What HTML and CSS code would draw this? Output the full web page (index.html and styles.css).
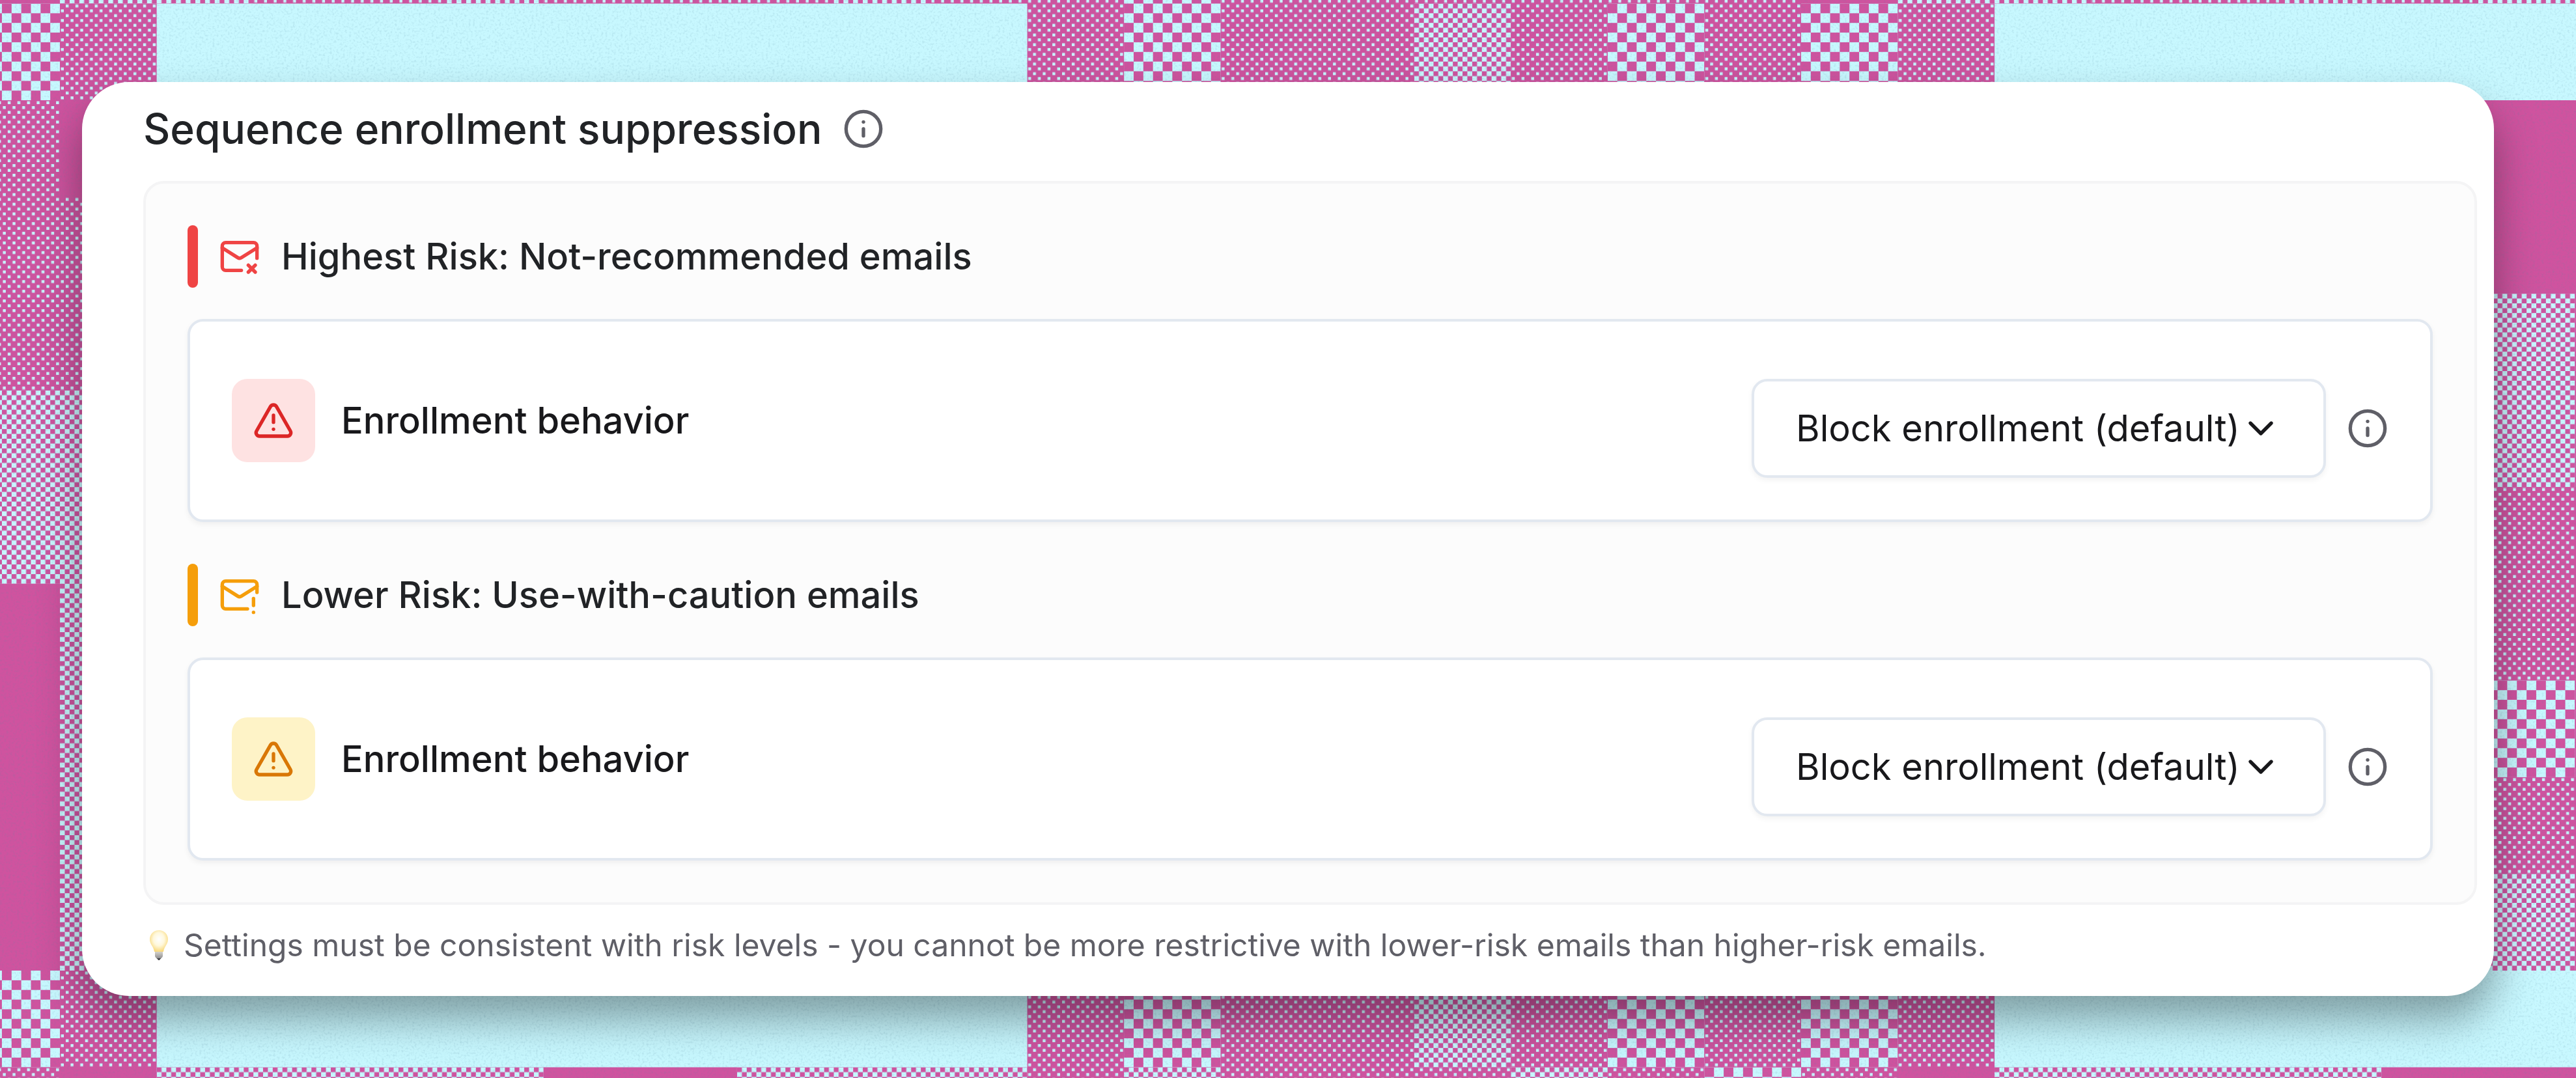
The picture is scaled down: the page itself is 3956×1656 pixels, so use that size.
FILE: index.html
```html
<!DOCTYPE html>
<html lang="en">
<head>
    <meta charset="UTF-8">
    <meta name="viewport" content="width=device-width, initial-scale=1.0">
    <title>Sequence enrollment suppression</title>
    <link rel="stylesheet" href="styles.css">
</head>
<body>
    <!-- Woven backdrop: every module is 20 units square -->
    <svg class="backdrop" viewBox="0 0 3956 1656" preserveAspectRatio="xMidYMid slice" aria-hidden="true">
        <defs>
            <pattern id="coarse" width="4" height="4" patternUnits="userSpaceOnUse">
                <path class="thread" d="M2 0h2v2h-2zM0 2h2v2h-2z"/>
            </pattern>
            <pattern id="fine" width="2" height="2" patternUnits="userSpaceOnUse">
                <path class="thread" d="M1 0h1v1h-1zM0 1h1v1h-1z"/>
            </pattern>
            <pattern id="dots" width="2" height="2" patternUnits="userSpaceOnUse">
                <path class="thread" d="M1.2 .2h.6v.6h-.6zM.2 1.2h.6v.6h-.6z"/>
            </pattern>
            <filter id="grain" x="0" y="0" width="100%" height="100%">
                <feTurbulence type="fractalNoise" baseFrequency="0.3" numOctaves="2" seed="4"/>
                <feColorMatrix values="0 0 0 0 0.1  0 0 0 0 0.25  0 0 0 0 0.35  0 0 0 1.4 -0.66"/>
            </filter>
        </defs>
        <rect class="cloth" width="3956" height="1656"/>
        <g transform="translate(-56.5 5.5) scale(7.4275)">
            <!-- plain areas -->
            <path class="thread" d="M40 0h180v20h-180zM420 0h140v20h-140zM40 200h180v20h-180zM420 200h140v20h-140z"/>
            <!-- coarse checks -->
            <path fill="url(#coarse)" d="M0 0h20v20h-20zM240 -20h20v40h-20zM340 0h20v20h-20zM380 0h20v20h-20zM0 200h20v20h-20zM240 200h20v20h-20zM340 200h20v20h-20zM380 200h20v20h-20zM360 220h20v20h-20zM520 140h20v20h-20z"/>
            <!-- fine checks -->
            <path fill="url(#fine)" d="M300 0h20v20h-20zM300 200h20v20h-20zM0 80h40v40h-40zM20 120h20v80h-20zM520 60h20v40h-20zM520 180h20v20h-20zM20 -20h40v20h-40zM100 -20h20v20h-20zM180 -20h20v20h-20zM400 -20h40v20h-40zM480 -20h20v20h-20zM520 -20h40v20h-40zM40 220h80v20h-80zM160 220h60v20h-60zM240 220h20v20h-20zM320 220h20v20h-20zM420 220h80v20h-80z"/>
            <!-- dots -->
            <path fill="url(#dots)" d="M20 0h20v20h-20zM220 0h20v20h-20zM260 0h40v20h-40zM320 0h20v20h-20zM360 0h20v20h-20zM400 0h20v20h-20zM0 20h20v20h-20zM0 40h40v40h-40zM520 100h20v40h-20zM520 160h20v20h-20zM20 200h20v20h-20zM220 200h20v20h-20zM260 200h40v20h-40zM320 200h20v20h-20zM360 200h20v20h-20zM400 200h20v20h-20zM60 -20h40v20h-40zM120 -20h60v20h-60zM200 -20h40v20h-40zM260 -20h120v20h-120zM440 -20h40v20h-40zM500 -20h20v20h-20zM0 220h20v20h-20zM220 220h20v20h-20zM260 220h60v20h-60zM340 220h20v20h-20zM380 220h20v20h-20z"/>
        </g>
        <rect width="3956" height="1656" filter="url(#grain)" opacity="0.3"/>
    </svg>

    <main class="card">
        <div class="card-header">
            <h1>Sequence enrollment suppression</h1>
            <button type="button" class="info-button" aria-label="About sequence enrollment suppression">
                <svg class="icon" viewBox="0 0 24 24"><circle cx="12" cy="12" r="10"/><path d="M12 16v-4"/><path d="M12 8h.01"/></svg>
            </button>
        </div>

        <div class="panel">
            <section class="risk-section risk-high">
                <div class="risk-header">
                    <span class="risk-bar"></span>
                    <svg class="icon risk-icon" viewBox="0 0 24 24"><path d="M22 13V6a2 2 0 0 0-2-2H4a2 2 0 0 0-2 2v12c0 1.1.9 2 2 2h9"/><path d="m22 7-8.97 5.7a1.94 1.94 0 0 1-2.06 0L2 7"/><path d="m17 17 4 4"/><path d="m21 17-4 4"/></svg>
                    <h2>Highest Risk: Not-recommended emails</h2>
                </div>
                <div class="setting">
                    <span class="setting-icon">
                        <svg class="icon" viewBox="0 0 24 24"><path d="m21.73 18-8-14a2 2 0 0 0-3.48 0l-8 14A2 2 0 0 0 4 21h16a2 2 0 0 0 1.73-3"/><path d="M12 9v4"/><path d="M12 17h.01"/></svg>
                    </span>
                    <label for="high-risk-behavior">Enrollment behavior</label>
                    <div class="setting-controls">
                        <div class="select-wrap">
                            <select id="high-risk-behavior">
                                <option>Block enrollment (default)</option>
                            </select>
                            <svg class="icon chevron" viewBox="0 0 24 24"><path d="m6 9 6 6 6-6"/></svg>
                        </div>
                        <button type="button" class="info-button" aria-label="About highest risk behavior">
                            <svg class="icon" viewBox="0 0 24 24"><circle cx="12" cy="12" r="10"/><path d="M12 16v-4"/><path d="M12 8h.01"/></svg>
                        </button>
                    </div>
                </div>
            </section>

            <section class="risk-section risk-low">
                <div class="risk-header">
                    <span class="risk-bar"></span>
                    <svg class="icon risk-icon" viewBox="0 0 24 24"><path d="M22 10.5V6a2 2 0 0 0-2-2H4a2 2 0 0 0-2 2v12c0 1.1.9 2 2 2h12.5"/><path d="m22 7-8.97 5.7a1.94 1.94 0 0 1-2.06 0L2 7"/><path d="M20 14v4"/><path d="M20 22v.01"/></svg>
                    <h2>Lower Risk: Use-with-caution emails</h2>
                </div>
                <div class="setting">
                    <span class="setting-icon">
                        <svg class="icon" viewBox="0 0 24 24"><path d="m21.73 18-8-14a2 2 0 0 0-3.48 0l-8 14A2 2 0 0 0 4 21h16a2 2 0 0 0 1.73-3"/><path d="M12 9v4"/><path d="M12 17h.01"/></svg>
                    </span>
                    <label for="low-risk-behavior">Enrollment behavior</label>
                    <div class="setting-controls">
                        <div class="select-wrap">
                            <select id="low-risk-behavior">
                                <option>Block enrollment (default)</option>
                            </select>
                            <svg class="icon chevron" viewBox="0 0 24 24"><path d="m6 9 6 6 6-6"/></svg>
                        </div>
                        <button type="button" class="info-button" aria-label="About lower risk behavior">
                            <svg class="icon" viewBox="0 0 24 24"><circle cx="12" cy="12" r="10"/><path d="M12 16v-4"/><path d="M12 8h.01"/></svg>
                        </button>
                    </div>
                </div>
            </section>
        </div>

        <p class="hint">
            <svg class="bulb" viewBox="0 0 48 48" aria-hidden="true">
                <defs>
                    <radialGradient id="glow" cx="0.5" cy="0.42" r="0.6">
                        <stop offset="0" stop-color="#ffffff"/>
                        <stop offset="0.5" stop-color="#fff8dc"/>
                        <stop offset="1" stop-color="#f8d673"/>
                    </radialGradient>
                    <linearGradient id="cap" x1="0" y1="0" x2="0" y2="1">
                        <stop offset="0" stop-color="#d6d3cc"/>
                        <stop offset="1" stop-color="#8a8a8c"/>
                    </linearGradient>
                </defs>
                <path d="M24 1c8 0 14 6 14 14 0 8-6 11-7 19H17c-1-8-7-11-7-19C10 7 16 1 24 1z" fill="url(#glow)"/>
                <path d="M18 34h12v6c0 3-2 3-3 5h-6c-1-2-3-2-3-5z" fill="url(#cap)"/>
                <path d="M21 44h6l-2 3h-2z" fill="#4a4a4d"/>
            </svg>
            <span>Settings must be consistent with risk levels - you cannot be more restrictive with lower-risk emails than higher-risk emails.</span>
        </p>
    </main>
</body>
</html>
```

FILE: styles.css
```css
:root {
    --pink: #cf539f;
    --cyan: #c8f8ff;
    --border: #e2e8f0;
    --panel-border: #f4f4f5;
    --panel-bg: #fcfcfc;
    --text-primary: #18181b;
    --text-heading: #212326;
    --text-secondary: #5f5f67;
}

* {
    margin: 0;
    padding: 0;
    box-sizing: border-box;
}

body {
    font-family: Inter, 'Liberation Sans', sans-serif;
    background: var(--pink);
    color: var(--text-primary);
    min-height: 100vh;
    padding: 126px;
}

.backdrop {
    position: fixed;
    top: 0;
    left: 0;
    width: 100%;
    height: 100%;
    z-index: -1;
}

.cloth {
    fill: var(--pink);
}

.thread {
    fill: var(--cyan);
}

.card {
    background: #ffffff;
    border-radius: 72px;
    padding: 24px 26px 48px 94px;
    box-shadow: 0 36px 64px rgba(0, 0, 0, 0.36);
}

.icon {
    display: block;
    flex-shrink: 0;
    width: 64px;
    height: 64px;
    fill: none;
    stroke: currentColor;
    stroke-width: 2;
    stroke-linecap: round;
    stroke-linejoin: round;
}

h1,
h2,
label {
    font-size: 56px;
    font-weight: 500;
    line-height: 80px;
}

.card-header {
    display: flex;
    align-items: center;
    gap: 32px;
    margin-bottom: 32px;
}

h1 {
    font-size: 64px;
    line-height: 96px;
    color: var(--text-heading);
}

h2 {
    color: var(--text-heading);
}

.info-button {
    background: none;
    border: none;
    color: var(--text-secondary);
    cursor: pointer;
}

.panel {
    display: flex;
    flex-direction: column;
    gap: 64px;
    padding: 64px;
    background: var(--panel-bg);
    border: 4px solid var(--panel-border);
    border-radius: 32px;
}

.risk-section {
    display: flex;
    flex-direction: column;
    gap: 48px;
}

.risk-high {
    --accent: #ef4444;
    --accent-dark: #dc2626;
    --accent-bg: #fee2e2;
}

.risk-low {
    --accent: #f59e0b;
    --accent-dark: #d97706;
    --accent-bg: #fef3c7;
}

.risk-header {
    display: flex;
    align-items: center;
    gap: 32px;
}

.risk-bar {
    width: 16px;
    height: 96px;
    border-radius: 8px;
    background: var(--accent);
}

.risk-icon {
    color: var(--accent);
}

.setting {
    display: flex;
    align-items: center;
    gap: 40px;
    padding: 64px;
    background: #ffffff;
    border: 4px solid var(--border);
    border-radius: 24px;
    box-shadow: 0 4px 8px rgba(0, 0, 0, 0.05);
}

.setting-icon {
    padding: 32px;
    border-radius: 24px;
    background: var(--accent-bg);
    color: var(--accent-dark);
}

.setting-controls {
    display: flex;
    align-items: center;
    gap: 32px;
    margin-left: auto;
    padding-top: 24px;
}

.select-wrap {
    position: relative;
}

select {
    display: block;
    appearance: none;
    height: 152px;
    padding: 0 128px 0 64px;
    font-family: inherit;
    font-size: 56px;
    font-weight: 400;
    color: var(--text-primary);
    background: #ffffff;
    border: 4px solid var(--border);
    border-radius: 24px;
    box-shadow: 0 4px 8px rgba(0, 0, 0, 0.05);
    cursor: pointer;
}

/* Arrow sits over the select */
.chevron {
    position: absolute;
    right: 68px;
    top: 44px;
    pointer-events: none;
}

.hint {
    display: flex;
    align-items: center;
    gap: 14px;
    margin-top: 32px;
    font-size: 48px;
    line-height: 60px;
    color: var(--text-secondary);
}

.bulb {
    flex-shrink: 0;
    width: 48px;
    height: 48px;
}
```
